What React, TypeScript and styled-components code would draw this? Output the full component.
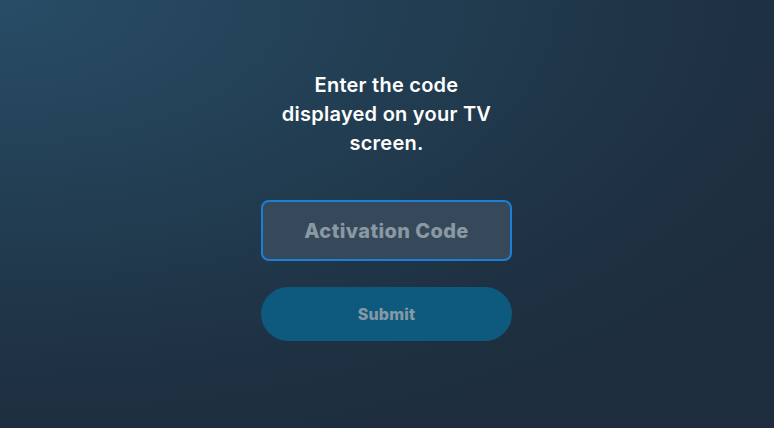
import styled, { createGlobalStyle } from "styled-components";

const Global = createGlobalStyle`
  html, body {
    margin: 0;
    padding: 0;
  }
  body {
    font-family: Inter, "Noto Sans", sans-serif;
  }
`;

const Page = styled.main`
  min-height: 100vh;
  box-sizing: border-box;
  display: flex;
  flex-direction: column;
  align-items: center;
  padding-top: 71px;
  padding-right: 1px;
  background: radial-gradient(
      ellipse 120% 110% at 0% 0%,
      #284d66 0%,
      #223d52 45%,
      #1e3142 80%,
      #1d2d3d 100%
    );
`;

const Heading = styled.h1`
  margin: 0;
  width: 240px;
  text-align: center;
  color: #ffffff;
  font-size: 20px;
  font-weight: 600;
  line-height: 29px;
  letter-spacing: 0.25px;
`;

const Form = styled.form`
  display: flex;
  flex-direction: column;
  gap: 26px;
  margin-top: 42px;
  width: 251px;
`;

const CodeInput = styled.input`
  box-sizing: border-box;
  width: 100%;
  height: 61px;
  border: 2px solid #1b7fd6;
  border-radius: 8px;
  background: #36495a;
  color: #ffffff;
  caret-color: #ffffff;
  font-family: inherit;
  font-size: 20px;
  font-weight: 800;
  letter-spacing: 0.4px;
  text-align: center;
  outline: none;

  &::placeholder {
    color: #8a98a3;
    opacity: 1;
  }
`;

const SubmitButton = styled.button`
  height: 54px;
  width: 100%;
  border: none;
  border-radius: 27px;
  background: #0e5a7e;
  color: #8399a6;
  font-family: inherit;
  font-size: 16px;
  font-weight: 800;
  letter-spacing: 0.2px;
  cursor: default;
`;

export default function App() {
  return (
    <>
      <Global />
      <Page>
        <Heading>Enter the code displayed on your TV screen.</Heading>
        <Form onSubmit={(e) => e.preventDefault()}>
          <CodeInput placeholder="Activation Code" autoFocus />
          <SubmitButton type="submit" disabled>
            Submit
          </SubmitButton>
        </Form>
      </Page>
    </>
  );
}
